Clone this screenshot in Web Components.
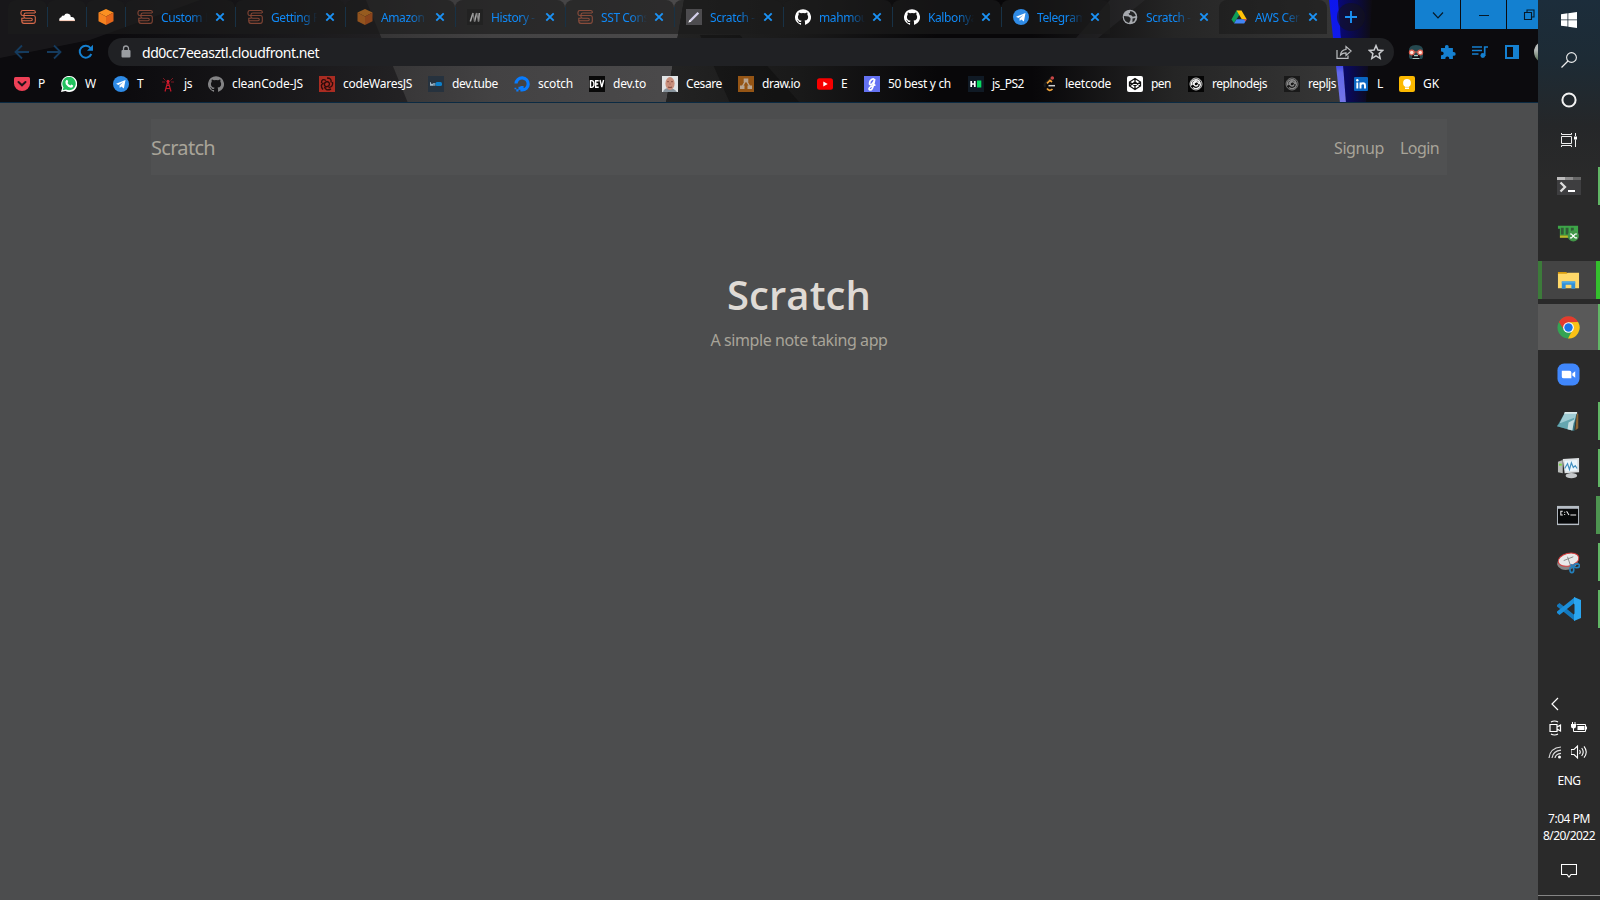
<!DOCTYPE html>
<html lang="en">
<head>
<meta charset="utf-8">
<title>Scratch - A simple note taking app</title>
<style>
html,body{margin:0;height:100%;overflow:hidden;background:#4c4d4e;font-family:"Noto Sans","Open Sans",sans-serif}
</style>
</head>
<body>
<desk-top></desk-top>
<script>
const SST='<g fill="none" stroke="#d9694a" stroke-width="1.100"><path d="M15.300 4V3Q15.300 1.500 13.500 1.500H3Q1 1.500 1 3.300V5Q1 6.500 3 6.500H12"/><path d="M15 4H6Q4 4 4 5.700V8Q4 9.300 6 9.300H11Q12.300 9.300 12.300 10.500T11 11.700H1.500"/><path d="M6 6.500H13.300Q15.300 6.500 15.300 8.300V12Q15.300 14.400 13 14.400H4Q1.800 14.400 1.800 11.700V9.300H4"/></g>';
const GH='M8 .2a8 8 0 0 0-2.5 15.600c.4.07.55-.17.55-.38v-1.500c-2.220.48-2.700-.95-2.700-.95-.36-.92-.89-1.170-.89-1.170-.72-.5.06-.48.06-.48.8.05 1.230.82 1.230.82.7 1.220 1.870.87 2.330.66.07-.52.28-.87.5-1.070-1.770-.2-3.640-.89-3.640-3.950 0-.87.31-1.590.82-2.150-.08-.2-.36-1.020.08-2.120 0 0 .67-.21 2.200.82a7.600 7.600 0 0 1 4 0c1.530-1.040 2.200-.82 2.200-.82.44 1.100.16 1.920.08 2.120.51.56.82 1.270.82 2.150 0 3.070-1.870 3.750-3.650 3.950.29.25.54.73.54 1.480v2.200c0 .21.15.46.55.38A8 8 0 0 0 8 .2z';
const CUBE='<path fill="#fb9022" d="M8 0l7.500 3.500L8 7.500.5 3.500z"/><path fill="#f58220" d="M.5 3.500l7.500 4V16L.5 12.300z"/><path fill="#e5661a" d="M15.500 3.500L8 7.500V16l7.500-3.700z"/>';
const TG='<circle cx="8" cy="8" r="8" fill="#2f8be6"/><path fill="#fff" d="M3 7.800l9.500-3.800-1.600 8.500-2.700-2-1.400 1.400-.4-2.300 4-3.700-5 3.200z"/>';
const SWIRL='<g fill="none" stroke="currentColor"><circle cx="8" cy="8" r="6" stroke-width=".8"/><path stroke-width="1.400" d="M8 6a2 2 0 1 0 2 2.500M3.500 9.500Q2.500 4 8 3.800q3.500 0 4 3.500M5 11.500q3.500 2.500 6.500-.5 1.500-2 .5-4.500M5.200 9Q4.700 5.500 8 5.500q2.500.3 3 2.500"/></g>';
const ICONS={
sst:SST,
cloud:'<path fill="#fff" d="M.5 12q-1-3.200 1.800-3.700.5-2.300 2.700-1.500Q6.500 3.500 10 5q2 1 1.700 3 4-.7 4.300 4z"/><path fill="#f4a07b" d="M.5 11h15.300v1.200H.5z" opacity=".5"/>',
cube:CUBE,
medium:'<rect width="16" height="16" fill="#222"/><path d="M3.300 12.500L6 4M7.500 12.500L9.700 4M11.500 12.500L12.300 4" fill="none" stroke="#a9a9a9" stroke-width="1.500"/><path d="M6 4l1.500 8.500M9.700 4l1.800 8.500" stroke="#777" stroke-width="1.200"/>',
pencil:'<rect width="16" height="16" fill="#4d4c4f"/><path d="M2.500 13.500l1-2.600 8-8 1.700 1.700-8 8z" fill="#d4cfea"/><path d="M2.500 13.500l1-2.600 1.700 1.700z" fill="#fff"/>',
github:`<path fill="#fff" d="${GH}"/>`,
githubgrey:`<path fill="#838385" d="${GH}"/>`,
telegram:TG,
globe:'<circle cx="8" cy="8" r="7.300" fill="#a6a9ae"/><path fill="#242526" d="M1.800 7l4.700.5 2 1.500v2l-1.500 3q-5-1.300-5.200-7zM8 2.300q4.500.2 5.800 4.700l-3 .7-1.600-1.500L7.500 6l-1-1.500L8 4zM10.500 9.500l3-.5q-.6 3-3 4.300z"/>',
drive:'<path fill="#0f9d58" d="M5.500 1.500h1.500l2 3.500-6 9L.4 10.400z"/><path fill="#ffc107" d="M5.500 1.500h5L15.700 10.200h-4.900z"/><path fill="#4285f4" d="M3 14.500l2.500-4.300h10.200l-2.500 4.300z"/><path fill="#ea4335" d="M12.500 10.200h3.200l-1.200 2z"/>',
close:'<path d="M4.300 4.300l7.400 7.400M11.700 4.300l-7.400 7.400" stroke="#1b92f5" stroke-width="1.900"/>',
plus:'<path d="M8 2v12M2 8h12" stroke="#1b92f5" stroke-width="1.900"/>',
back:'<path d="M15 8H2M8 1.500L1.500 8 8 14.500" fill="none" stroke="#153b5e" stroke-width="1.800"/>',
forward:'<path d="M1 8h13M8 1.500L14.500 8 8 14.500" fill="none" stroke="#153b5e" stroke-width="1.800"/>',
reload:'<path d="M13.300 10A6 6 0 1 1 12.500 4L14 5.700" fill="none" stroke="#1580d0" stroke-width="2"/><path d="M15 .8v6H9z" fill="#1580d0"/>',
lock:'<path d="M4.500 6h7q1 0 1 1v5.500q0 1-1 1h-7q-1 0-1-1V7q0-1 1-1z" fill="#9a9da1"/><path d="M5.500 7V4.500a2.500 2.500 0 0 1 5 0V7" fill="none" stroke="#9a9da1" stroke-width="1.300"/>',
pocket:'<path fill="#ee4056" d="M1.500 1h13Q16 1 16 2.500V7.500a8 7.500 0 0 1-16 0V2.500Q0 1 1.500 1z"/><path d="M4.500 6L8 9.300 11.500 6" fill="none" stroke="#20131a" stroke-width="2" stroke-linecap="round"/>',
whatsapp:'<path fill="#fff" d="M0 16l1.200-4.200A8 8 0 1 1 4.400 15z"/><path fill="#22c15e" d="M1.700 14.300l.8-2.900A6.700 6.700 0 1 1 5 13.600z"/><path fill="#fff" d="M5.300 4l1.200.1.700 1.800-.7 1Q7.500 8.800 9.400 9.500l.9-1 1.900.9Q12 11.500 10 11.700 7 11.500 4.800 8.200 3.700 5.600 5.300 4z"/>',
tower:'<path d="M8 5L5 15.500M8 5l3 10.500M6.500 9.500h3M5.800 12.500h4.400" fill="none" stroke="#c4182a" stroke-width="1.200"/><path d="M5.500 4.500L3 2M10.500 4.500L13 2M5 6H2M11 6h3" stroke="#7e1721"/><circle cx="8" cy="5.300" r="1.500" fill="#d71c30"/>',
codewars:'<rect width="16" height="16" fill="#aa2c22"/><g fill="none" stroke="#2b0b0a" stroke-width="1.400"><path d="M8 2q5 0 4 4.500M13.500 6q1 5-4 5.500M12 13q-5 2.500-6.500-2M4 13.500Q.500 9 4.500 7M2.500 7Q2.500 2 7 4.500M8 5.500q3.500 1 2 4-2.500 2.500-4.500 0-.7-3 2.500-4"/></g>',
devtube:'<rect width="16" height="16" fill="#26323e"/><path fill="#9fb9cc" d="M2 6.200h1v1.600h2v2H2z"/><rect x="5" y="7" width="2.500" height="2.800" fill="#7893a7"/><rect x="7.500" y="6" width="6.500" height="4" rx="1.500" fill="#0c80cb"/>',
scotch:'<path d="M2 7.500A6.100 6.100 0 1 1 8 14V10" fill="none" stroke="#087cff" stroke-width="3.200"/><path fill="#087cff" d="M4.500 10.700h3v3h-3zM2.300 13.300h2.200v2.200H2.300zM.500 11.700h1.800v1.600H.5z"/>',
devto:'<rect width="16" height="16" fill="#090909"/><path d="M1.500 4.700v6.600Q5 12 5 8T1.500 4.700zM9.700 4.700H6.700v6.600h3M6.700 8h2.500M11 4l1.800 7L14.600 4" fill="none" stroke="#fff" stroke-width="1.400"/>',
face:'<rect width="16" height="16" fill="#e2e4e6"/><path fill="#88949d" d="M1 16q1-4 6-4t8 4z"/><ellipse cx="8" cy="7.500" rx="4.600" ry="6.500" fill="#c98f7c"/><path d="M5 5.700h2M9 5.700h2M6 11q2 1 4 0" stroke="#8b5248"/><path fill="#b87c6c" d="M7.300 6.500h1.400v2.500H7.300z"/>',
drawio:'<rect width="16" height="16" fill="#955515"/><path d="M8 4L4 11M8 4l4 7" stroke="#b8a592" stroke-width="1.500"/><path fill="#b8a592" d="M5.700 2.500h4.600v3.700H5.700zM2 9.500h4.500V13H2zM9.500 9.500H14V13H9.500z"/>',
youtube:'<rect y="2.300" width="16" height="11.400" rx="2.500" fill="#f70000"/><path fill="#fff" d="M6.300 5.500v5L10.700 8z"/>',
g:'<rect width="16" height="16" fill="#6472f3"/><path d="M10.500 5Q10.500 2 8 3.300T5.500 8Q7 9.800 9.300 6.500L10.800 3q-1.500 9-3.500 10.800-2.500.5-2.300-1.300Q6 10 11.500 9" fill="none" stroke="#fff" stroke-width="1.600"/>',
hr:'<rect width="16" height="16" fill="#101a25"/><path d="M3.200 5v6M6.800 5v6M3.200 8h3.600" stroke="#fff" stroke-width="1.700"/><rect x="9" y="4.500" width="4.300" height="7" fill="#06dc60"/>',
leet:'<path d="M10 2L4.500 7Q2.500 9 4.500 11" fill="none" stroke="#1b1b1b" stroke-width="2"/><path d="M11 6L9 4.300 6 7.300M6 12.500q2.500 3.500 5.500.5" fill="none" stroke="#f1a33a" stroke-width="1.700"/><path d="M7.500 9.700h6.500" stroke="#d0d0d0" stroke-width="1.500"/><circle cx="11.300" cy="2" r="1.800" fill="#c94646"/>',
codepen:'<rect width="16" height="16" rx="2" fill="#fff"/><path d="M8 2.500l5.500 3.500v4L8 13.500 2.500 10V6zM8 2.500v3.600M8 13.500V9.900M2.500 6L8 9.900 13.500 6M2.500 10L8 6.100l5.500 3.900" fill="none" stroke="#111" stroke-width="1.300"/>',
replw:`<rect width="16" height="16" fill="#050505"/><g color="#f2f2f2">${SWIRL}</g>`,
repl:`<rect width="16" height="16" fill="#191919"/><g color="#8a8a8a">${SWIRL}</g>`,
linkedin:'<rect x="1" y="1" width="14" height="14" rx="1" fill="#0a66c2"/><path d="M4.300 6.500v6M7.500 12.500v-6M7.500 9Q8 7.300 10 7.300t2 2.200v3" fill="none" stroke="#fff" stroke-width="1.900"/><circle cx="4.300" cy="4.200" r="1.200" fill="#fff"/>',
keep:'<rect width="16" height="16" rx="2" fill="#fcb900"/><circle cx="8" cy="7" r="3.900" fill="#fff"/><path fill="#fff" d="M6 10h4v3H6z"/><path d="M6 11.300h4" stroke="#fcb900" stroke-width=".6"/>',
share:'<path d="M1 6v8.300h11V11.500" fill="none" stroke="#bcbec1" stroke-width="1.200"/><path d="M4.500 11Q5 6 10 5.500V2.500l5.200 4.500-5.200 4.500V8.800Q6.500 8.800 4.500 11z" fill="none" stroke="#bcbec1" stroke-width="1.200"/>',
star:'<path d="M8 1.600l1.900 4.400 4.900.4-3.700 3.200 1.100 4.800L8 11.900l-4.200 2.500 1.100-4.800L1.200 6.400 6.100 6z" fill="none" stroke="#c9cbce" stroke-width="1.500"/>',
skull:'<path fill="#25484f" d="M1 8Q0 1 8 1t7 7v5l-1 2H2l-1-2z"/><path fill="#111015" d="M4 11h8v4H4z"/><path fill="#a9c9c4" d="M6 11h4v1.200H6zM4.500 14h7v1h-7z"/><path d="M5 8h6" stroke="#dc5c4c"/><circle cx="3.800" cy="8.500" r="2.400" fill="#ffe1d6" stroke="#dc5c4c" stroke-width="1.200"/><circle cx="12.200" cy="8.500" r="2.400" fill="#ffe1d6" stroke="#dc5c4c" stroke-width="1.200"/>',
puzzle:'<path fill="#1580d0" d="M1 4h4Q4.500 1 6.800 1T8.600 4h4.300v4q2.800-.3 2.800 1.900t-2.800 1.900V15H9.200q.3-2.600-1.900-2.600T5.400 15H1v-3.800q2.700.2 2.700-1.800T1 7.600z"/>',
music:'<path d="M0 3h10M0 6.500h10M0 10h6.500M12.700 12V3H16" fill="none" stroke="#1580d0" stroke-width="1.700"/><circle cx="10.800" cy="11.500" r="2.400" fill="#1580d0"/>',
side:'<path fill="#1580d0" fill-rule="evenodd" d="M1 1h14v14H1zM3 3v10h6V3z"/>',
caret:'<path d="M3 5.500l5 5.300 5-5.300" fill="none" stroke="#071a29" stroke-width="1.200"/>',
min:'<path d="M3 8.500h10" stroke="#071a29"/>',
restore:'<path d="M3.500 5.500h7v7h-7zM6 5.500V3h7v7h-2.500" fill="none" stroke="#071a29" stroke-width="1.100"/>',
win:'<path fill="#fff" d="M0 2.200l6.500-.9v6.200H0zM7.300 1.200L16 0v7.500H7.300zM0 8.300h6.500v6.300L0 13.700zM7.300 8.300H16V16l-8.700-1.200z"/>',
search:'<circle cx="10.500" cy="5.500" r="4.900" fill="none" stroke="#eee" stroke-width="1.100"/><path d="M7 9L.500 15.500" stroke="#eee" stroke-width="1.200"/>',
ring:'<circle cx="8" cy="8" r="6.600" fill="none" stroke="#f3f3f3" stroke-width="2"/>',
task:'<path d="M.500 4.500h10v7H.5zM.5 1v1.500h10V1M.5 15v-1.500h10V15M14.500 1v3M14.500 7.500V15" fill="none" stroke="#eee"/><path fill="#fff" d="M13 4.500h3v3h-3z"/>',
terminal:'<path fill="#3e3e40" d="M0 3h24v18H0z"/><path fill="#bcbcbc" d="M0 3h8v3H0z"/><path fill="#8b8b8b" d="M8 3h8v3H8z"/><path fill="#666" d="M16 3h8v3h-8z"/><path d="M3.500 8.500L8 13l-4.500 4.500" fill="none" stroke="#ddd" stroke-width="2.300"/><path d="M11 17h7" stroke="#fff" stroke-width="2"/>',
memory:'<path fill="#3da548" d="M1 4h21v10H3V7H1z"/><path d="M5.500 6v7M10.500 6v7M16 6v7" stroke="#315b37" stroke-width="3"/><path fill="#b8bd27" d="M3 14h10v2.500H3z"/><circle cx="17" cy="14.500" r="5.800" fill="#429748"/><path d="M13.500 12.500H15l4 4h2M13.500 16.500H15l4-4h2" fill="none" stroke="#fff" stroke-width="1.200"/>',
folder:'<path fill="#d89b0c" d="M1 3h9l1 3H1z"/><path fill="#ffd869" d="M1 5h9l1-1h12v16H1z"/><path fill="#318fd7" d="M5 13h14v7.500h-4V16.500H9v4H5z"/><path fill="#48a8e8" d="M5 13h14v2H5z"/>',
chrome:'<circle cx="12" cy="12" r="11.500" fill="#34a353"/><path fill="#e33b2e" d="M2 6.200A11.500 11.500 0 0 1 22 6.200L12 7 7 14z"/><path fill="#fbc116" d="M22 6.200A11.500 11.500 0 0 1 11.500 23.500L16.500 14 12 6.500z"/><circle cx="12" cy="12" r="5.600" fill="#fff"/><circle cx="12" cy="12" r="4.400" fill="#1a73e8"/>',
zoom:'<rect x=".5" y=".5" width="23" height="23" rx="7" fill="#4087fc"/><path fill="#fff" d="M5 8h8q2 0 2 2v6H7q-2 0-2-2zM16 11l3-2.500v7L16 13z"/>',
note:'<path fill="#8a6334" d="M20.500 4h1.700v15l-3 2z"/><path fill="#37727d" d="M8 3h12.500l-2.500 19L0 17z"/><path fill="#9fcbd3" d="M8 3h12.500L18 13 2.500 14z"/><path fill="#dbe9ea" d="M8 2h13v2H7.500z"/><path fill="#65a6b0" d="M2.500 14L18 8l-2 13.500L0 17z"/><path fill="#c5dee1" d="M12 13l6-3-2 11.500-5-1.300z"/>',
monitor:'<path fill="#b8bbb9" d="M1 5l5-2v14l-5-1z"/><path fill="#77d83f" d="M2 7h3v2H2z"/><path fill="#dce0e2" d="M6 2l17-1v15l-15 1z"/><path fill="#eaf5fb" d="M8 4l13-1v11L9 15z"/><path d="M8 12l3-5 2 6 2-7 2 5 2-2 2 3" fill="none" stroke="#408fc0" stroke-width="1.200"/><ellipse cx="15" cy="19.500" rx="6" ry="2.700" fill="#c5c8ca"/>',
cmd:'<path fill="#b6bdc5" d="M0 2h23v20H0z"/><path fill="#08090a" d="M1 5h21v15.500H1z"/><path d="M6 7.500H4v4h2M8 8v1M8 10.500v1M10 7.500l2.500 4M14 11.500h6" fill="none" stroke="#eee" stroke-width="1.100"/>',
snip:'<ellipse cx="11" cy="12" rx="11" ry="7.500" transform="rotate(-14 11 12)" fill="#858585"/><ellipse cx="12" cy="9" rx="11" ry="6.500" transform="rotate(-14 12 9)" fill="#e9e9e9" stroke="#d63b3b"/><path d="M7 10l10-4M11 6l3 9" stroke="#888" fill="none"/><g fill="none" stroke="#2380bd" stroke-width="1.700"><ellipse cx="15.500" cy="19.500" rx="2" ry="3"/><ellipse cx="20.500" cy="15.500" rx="3" ry="2"/><path d="M14 14l4 2"/></g>',
vscode:'<path fill="#1479be" d="M0 8l2.500-2L18 18.500v5.500L0 9.500z"/><path fill="#1b8fda" d="M0 16l2.500 2L18 5.500V0L0 14.500z"/><path fill="#2aa5ef" d="M17 0l7 3v18l-7 3z"/><path fill="#2b2b2b" d="M17.500 7v10L11 12z"/>',
left:'<path d="M11 2L5 8l6 6" fill="none" stroke="#fff" stroke-width="1.200"/>',
meet:'<path d="M3 4.500h7v7H3zM10 7l3.500-2v6L10 9M4 2q3.500-2 7 0M4 14q3.500 2 7 0" fill="none" stroke="#fff" stroke-width="1.200"/>',
battery:'<path d="M5.500 4.500h9v7h-9M15.500 6.500v3" fill="none" stroke="#fff"/><path fill="#fff" d="M6.500 6h7v4h-7zM0 4h5v2.500Q5 8.500 2.500 8.500T0 6.500zM1 2h1v2H1zM3.500 2h1v2h-1z"/><path d="M2.500 8v3.500H6" fill="none" stroke="#fff"/>',
wifi:'<g fill="none" stroke="#ddd" stroke-width="1.200"><path d="M2 14Q3 4 14 3M5 14Q6 7 14 6.200M8 14q.5-4 6-4.700"/></g><circle cx="12.500" cy="13" r="1.500" fill="#fff"/>',
sound:'<path d="M0 5.500h3l3.500-3.500v12L3 10.500H0zM8.500 6q1.500 2 0 4M10.700 4q3 4 0 8M13 2.300q4.500 5.700 0 11.400" fill="none" stroke="#fff" stroke-width="1.100"/>',
notice:'<path d="M.5 2.500h15v10H10L8 15l-2-2.500H.5z" fill="none" stroke="#fff" stroke-width="1.100"/>'
};

/* shared base: renders css + markup into an open shadow root */
class Base extends HTMLElement{
  constructor(){super();this.attachShadow({mode:'open'})}
  connectedCallback(){this.shadowRoot.innerHTML=`<style>${this.css()}</style>${this.html()}`;this.ready&&this.ready()}
}
customElements.define('ui-icon',class extends Base{
  css(){const s=this.getAttribute('size')||16;return `:host{display:block;flex:none;width:${s}px;height:${s}px}svg{display:block;width:100%;height:100%}`}
  html(){const b=this.getAttribute('box')||16;return `<svg viewBox="0 0 ${b} ${b}">${ICONS[this.getAttribute('name')]}</svg>`}
});
/* a single line of text tracked to a given width */
customElements.define('fit-text',class extends Base{
  css(){return ':host{display:block;white-space:nowrap;flex:none}span{display:inline-block}'}
  html(){return `<span>${this.getAttribute('text')}</span>`}
  ready(){const s=this.shadowRoot.querySelector('span'),w=+this.getAttribute('w'),n=this.getAttribute('text').length;
    s.style.letterSpacing=((w-s.getBoundingClientRect().width)/n).toFixed(3)+'px';this.style.width=w+'px'}
});
customElements.define('browser-tab',class extends Base{
  css(){return `:host{display:flex;box-sizing:border-box;height:34px;align-items:center;padding-left:12px;position:relative;background:rgba(27,27,28,.65);border-radius:8px 8px 0 0;width:110px;flex:none;color:#1089f6}
  :host([active]){background:none}
  :host([sep])::after{content:"";position:absolute;right:-1px;top:7px;width:1px;height:20px;background:#135d94}
  .t{width:46px;white-space:nowrap;margin-left:8px;font-size:12px;letter-spacing:-.4px;-webkit-mask-image:linear-gradient(90deg,#000 64%,transparent)}
  .c{margin-left:${this.getAttribute('w')==='110'?5:4}px}.i{opacity:${this.hasAttribute('dim')?.55:1}}`}
  html(){const t=this.getAttribute('text');return `<ui-icon class="i" name="${this.getAttribute('icon')}"></ui-icon>${t?`<div class="t">${t}</div><ui-icon class="c" name="close"></ui-icon>`:''}`}
  ready(){const w=this.getAttribute('w');if(w)this.style.width=w+'px'}
});
customElements.define('tab-strip',class extends Base{
  css(){return `:host{display:flex;height:38px;align-items:flex-start;padding-left:8px;box-sizing:border-box}
  .add{width:28px;height:28px;border-radius:50%;background:rgba(20,18,28,.6);display:grid;place-items:center;margin:3px 0 0 10px}
  .win{margin-left:auto;display:grid;grid-template-columns:45px 45px 31px;gap:1px}.win div{height:29px;background:#1380d0;display:flex;align-items:center;justify-content:center}
  .win div:last-child{justify-content:flex-start;padding-left:14px;box-sizing:border-box;overflow:hidden}`}
  html(){return `<browser-tab sep icon="sst" w="39"></browser-tab><browser-tab sep icon="cloud" w="39"></browser-tab><browser-tab sep icon="cube" w="39"></browser-tab>
  ${[['sst','Custom D',110,1],['sst','Getting F',110,1],['cube','Amazon',110,1],['medium','History -',110,0],['sst','SST Cons',109,1],['pencil','Scratch -',109,0],['github','mahmou',109,0],['github','Kalbonya',109,0],['telegram','Telegram',109,0]].map((t,i)=>`<browser-tab ${i<8?'sep':''} ${t[3]?'dim':''} icon="${t[0]}" text="${t[1]}" w="${t[2]}"></browser-tab>`).join('')}
  <browser-tab active icon="globe" text="Scratch -" w="109"></browser-tab><browser-tab icon="drive" text="AWS Cer" w="108"></browser-tab>
  <div class="add"><ui-icon name="plus"></ui-icon></div>
  <div class="win"><div><ui-icon name="caret"></ui-icon></div><div><ui-icon name="min"></ui-icon></div><div><ui-icon name="restore"></ui-icon></div></div>`}
});
customElements.define('address-row',class extends Base{
  css(){return `:host{display:flex;align-items:center;height:28px;padding-left:14px}
  .nav{display:flex;gap:16px;width:94px;flex:none}
  .box{width:1286px;flex:none;height:28px;border-radius:14px;background:#202124;display:flex;align-items:center;box-sizing:border-box;padding:0 10px 0 10px;color:#fff;font-size:14px}
  .box fit-text{margin:0 0 0 8px}.end{display:flex;margin-left:auto;gap:16px}
  .ext{display:flex;margin-left:14px;gap:16px;align-items:center}.av{width:28px;height:24px;border-radius:50%;background:linear-gradient(#b7bbb9 40%,#3c5a37);flex:none;margin-left:-2px}`}
  html(){return `<div class="nav"><ui-icon name="back"></ui-icon><ui-icon name="forward"></ui-icon><ui-icon name="reload"></ui-icon></div>
  <div class="box"><ui-icon name="lock"></ui-icon><fit-text text="dd0cc7eeasztl.cloudfront.net" w="177"></fit-text><div class="end"><ui-icon name="share"></ui-icon><ui-icon name="star"></ui-icon></div></div>
  <div class="ext"><ui-icon name="skull"></ui-icon><ui-icon name="puzzle"></ui-icon><ui-icon name="music"></ui-icon><ui-icon name="side"></ui-icon><div class="av"></div></div>`}
});
customElements.define('book-mark',class extends Base{
  css(){return ':host{display:flex;align-items:center;gap:8px;color:#fff;font-size:12px;line-height:16px}'}
  html(){return `<ui-icon name="${this.getAttribute('icon')}"></ui-icon><fit-text text="${this.getAttribute('text')}" w="${this.getAttribute('w')}"></fit-text>`}
});
customElements.define('bookmark-bar',class extends Base{
  css(){return ':host{display:grid;height:36px;padding-left:14px;align-items:center;grid-template-columns:47px 52px 47px 48px 111px 109px 86px 75px 73px 76px 79px 47px 104px 73px 86px 61px 96px 69px 46px 60px}'}
  html(){return [['pocket','P',7],['whatsapp','W',12],['telegram','T',7],['tower','js',8],['githubgrey','cleanCode-JS',71],['codewars','codeWaresJS',69],['devtube','dev.tube',46],['scotch','scotch',35],['devto','dev.to',33],['face','Cesare',36],['drawio','draw.io',38],['youtube','E',7],['g','50 best y ch',63],['hr','js_PS2',32],['leet','leetcode',46],['codepen','pen',20],['replw','replnodejs',55],['repl','repljs',28],['linkedin','L',6],['keep','GK',16]].map(b=>`<book-mark icon="${b[0]}" text="${b[1]}" w="${b[2]}"></book-mark>`).join('')}
});
customElements.define('browser-chrome',class extends Base{
  css(){return ':host{display:block;height:103px;position:relative;overflow:hidden;box-sizing:border-box;border-bottom:1px solid #0b2a42}.bg{position:absolute;inset:0;width:1538px;height:103px}.c{position:relative}'}
  html(){return `<svg class="bg" viewBox="0 0 1538 103" preserveAspectRatio="none"><defs>
  <linearGradient id="a"><stop offset="0" stop-color="#343334"/><stop offset=".4" stop-color="#434243"/><stop offset="1" stop-color="#4b4a4b"/></linearGradient>
  <linearGradient id="e"><stop offset="0" stop-color="#0c0b0e"/><stop offset="1" stop-color="#232224"/></linearGradient>
  <linearGradient id="b"><stop offset="0" stop-color="#232323"/><stop offset=".2" stop-color="#191919"/><stop offset=".4" stop-color="#080709"/><stop offset=".54" stop-color="#080709"/><stop offset=".75" stop-color="#252525"/><stop offset="1" stop-color="#373737"/></linearGradient>
  <linearGradient id="c"><stop offset="0" stop-color="#08087b"/><stop offset="1" stop-color="#0e0c11"/></linearGradient>
  <linearGradient id="d" x2="0" y2="1"><stop offset="0" stop-color="#0d16ee"/><stop offset=".55" stop-color="#101de8"/><stop offset=".7" stop-color="#6268ea"/><stop offset="1" stop-color="#7475e7"/></linearGradient></defs>
  <path fill="#0c0b0e" d="M0 0h1538v103H0z"/><path fill="url(#e)" d="M120 0h248l42 103H120z"/><path fill="#fff" opacity=".05" d="M0 0h200L90 40 0 58z"/>
  <path fill="url(#a)" d="M366 0h318l-6 35-12 68H408z"/><path fill="url(#b)" d="M684 0h646l14 103H666l12-68z"/>
  <path d="M700 35h40l60 68h-70z" fill="#0c0c0c" opacity=".45"/>
  <path fill="#38383a" d="M1110 0h35l-47 38h-22z" opacity=".3"/>
  <path fill="url(#c)" d="M1338 0h34l-6 103h-20z"/><path fill="url(#d)" d="M1329 0h9l8 103h-6z"/></svg>
  <div class="c"><tab-strip></tab-strip><address-row></address-row><bookmark-bar></bookmark-bar></div>`}
});
customElements.define('scratch-page',class extends Base{
  css(){return `:host{display:block;flex:1;background:#4c4d4e;padding:16px 91px 0 151px;color:#a8a499;font-size:16px}
  nav{height:56px;box-sizing:border-box;background:#505152;display:flex;align-items:center;padding:1px 8px 0 0;line-height:24px}
  .brand{font-size:20px;line-height:30px;margin-right:auto;padding-top:1px}.l{display:flex;gap:16px}
  main{display:flex;flex-direction:column;align-items:center;padding-top:96px}
  .h{font-family:"Open Sans",sans-serif;font-size:40px;font-weight:600;line-height:48px;color:#dfdad5}.s{line-height:24px;margin-top:9px}`}
  html(){return `<nav><fit-text class="brand" text="Scratch" w="64"></fit-text><div class="l"><fit-text text="Signup" w="50"></fit-text><fit-text text="Login" w="39"></fit-text></div></nav>
  <main><fit-text class="h" text="Scratch" w="144"></fit-text><fit-text class="s" text="A simple note taking app" w="177"></fit-text></main>`}
});
customElements.define('task-item',class extends Base{
  css(){return `:host{display:flex;height:47px;box-sizing:border-box;padding:0 1px 1px 0;align-items:center;justify-content:center;position:relative}
  .f{position:absolute;z-index:-1;inset:4px 0 5px;box-sizing:border-box}
  :host([run]) .f{border-right:2px solid #61b665}:host([multi]) .f{border-right:4px solid #4d9450}
  :host([folder]) .f{background:#444;border-left:4px solid #3c7b3a;border-right:4px solid #34c02d}
  :host([current]) .f{background:#595959;inset:0 0 1px}`}
  html(){return `<div class="f"></div><ui-icon name="${this.getAttribute('icon')}" size="${this.getAttribute('icon')=='vscode'||this.getAttribute('icon')=='terminal'?24:23}" box="24"></ui-icon>`}
});
customElements.define('task-bar',class extends Base{
  css(){return `:host{display:flex;flex-direction:column;width:62px;height:900px;background:linear-gradient(#1c2d3b 0,#1d2b35 60px,#252729 125px,#2a2a2a 180px);color:#fff;font-size:12px;position:relative;z-index:0}
  .top{display:grid;grid-template-rows:repeat(4,40px);place-items:center;height:163px}.apps{height:531px}
  .tray{display:grid;grid-template-columns:16px 16px;grid-auto-rows:24px;column-gap:8px;padding-left:9px;margin-top:-2px;align-items:center}
  .x{grid-column:1/3}.lab{display:flex;flex-direction:column;align-items:center;line-height:17px}.eng{margin-top:8px}.time{margin-top:21px}
  .n{margin:18px auto 0}.line{height:1px;background:#858585;margin-top:auto;margin-bottom:4px}`}
  html(){return `<div class="top"><ui-icon name="win"></ui-icon><ui-icon name="search"></ui-icon><ui-icon name="ring"></ui-icon><ui-icon name="task"></ui-icon></div>
  <div class="apps"><task-item run icon="terminal"></task-item><task-item icon="memory"></task-item><task-item folder icon="folder"></task-item><task-item current run icon="chrome"></task-item><task-item icon="zoom"></task-item><task-item run icon="note"></task-item><task-item run icon="monitor"></task-item><task-item multi icon="cmd"></task-item><task-item run icon="snip"></task-item><task-item run icon="vscode"></task-item></div>
  <div class="tray"><ui-icon class="x" name="left"></ui-icon><ui-icon name="meet"></ui-icon><ui-icon name="battery"></ui-icon><ui-icon name="wifi"></ui-icon><ui-icon name="sound"></ui-icon></div>
  <div class="lab"><fit-text class="eng" text="ENG" w="23"></fit-text><fit-text class="time" text="7:04 PM" w="42"></fit-text><fit-text text="8/20/2022" w="52"></fit-text></div>
  <ui-icon class="n" name="notice"></ui-icon><div class="line"></div>`}
});
customElements.define('desk-top',class extends Base{
  css(){return ':host{display:grid;grid-template-columns:1538px 62px;height:900px;width:1600px}.w{display:flex;flex-direction:column;min-width:0;overflow:hidden}'}
  html(){return '<div class="w"><browser-chrome></browser-chrome><scratch-page></scratch-page></div><task-bar></task-bar>'}
});
</script>
</body>
</html>
